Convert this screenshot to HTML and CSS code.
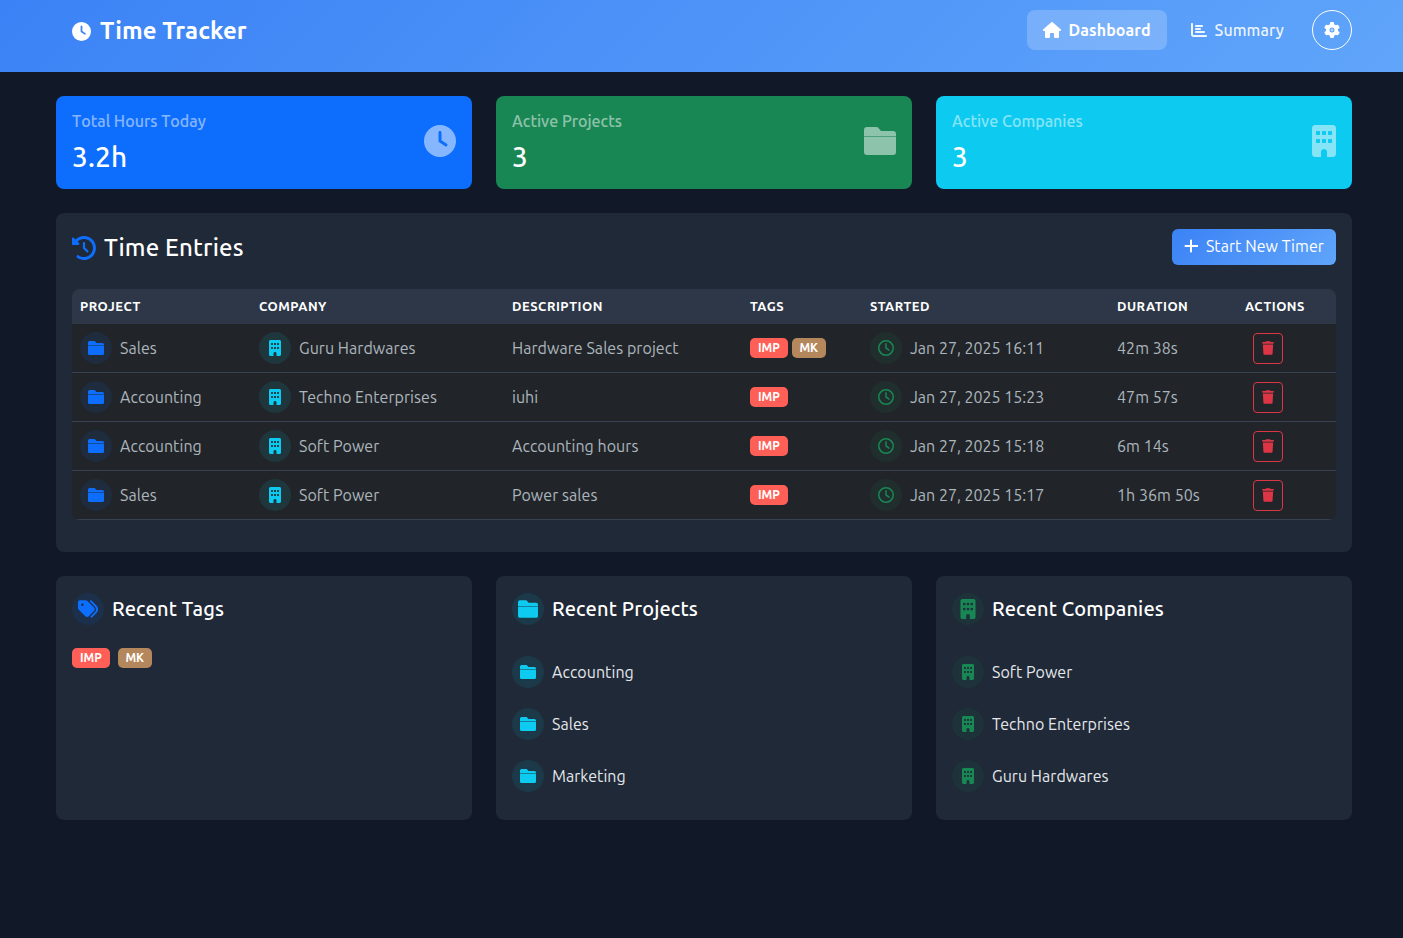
FILE: index.html
```html
<!DOCTYPE html>
<html lang="en">
  <head>
    <meta charset="UTF-8" />
    <title>Time Tracker</title>
    <link rel="stylesheet" href="styles.css">
  </head>
  <body>
    <svg class="sprite" width="0" height="0">
      <symbol id="i-clock-fill" viewBox="0 0 512 512"><path d="M256 0a256 256 0 1 1 0 512A256 256 0 1 1 256 0zM232 120V256c0 8 4 15.5 10.7 20l96 64c11 7.4 25.9 4.4 33.3-6.7s4.4-25.9-6.7-33.3L280 243.2V120c0-13.3-10.7-24-24-24s-24 10.700-24 24z"/></symbol>
      <symbol id="i-clock" viewBox="0 0 512 512"><path d="M464 256A208 208 0 1 1 48 256a208 208 0 1 1 416 0zM0 256a256 256 0 1 0 512 0A256 256 0 1 0 0 256zM232 120V256c0 8 4 15.5 10.7 20l96 64c11 7.4 25.9 4.4 33.3-6.7s4.4-25.9-6.7-33.3L280 243.2V120c0-13.3-10.7-24-24-24s-24 10.700-24 24z"/></symbol>
      <symbol id="i-folder" viewBox="0 0 16 16"><path d="M1.500 1h4.700c.4 0 .7.100.9.400L8.500 3h6A1.500 1.500 0 0 1 16 4.500v1.100H0V2.500A1.500 1.500 0 0 1 1.500 1z"/><path d="M0 5.900h16v7.600a1.500 1.500 0 0 1-1.500 1.500h-13A1.500 1.500 0 0 1 0 13.500V5.900z"/></symbol>
      <symbol id="i-building" viewBox="0 0 384 512"><path d="M48 0C21.500 0 0 21.500 0 48V464c0 26.500 21.500 48 48 48h96V432c0-26.500 21.500-48 48-48s48 21.500 48 48v80h96c26.500 0 48-21.500 48-48V48c0-26.500-21.500-48-48-48H48zM64 240c0-8.800 7.200-16 16-16h32c8.800 0 16 7.200 16 16v32c0 8.800-7.200 16-16 16H80c-8.800 0-16-7.200-16-16V240zm112-16h32c8.800 0 16 7.200 16 16v32c0 8.800-7.200 16-16 16H176c-8.800 0-16-7.200-16-16V240c0-8.800 7.200-16 16-16zm80 16c0-8.800 7.200-16 16-16h32c8.800 0 16 7.200 16 16v32c0 8.800-7.200 16-16 16H272c-8.800 0-16-7.200-16-16V240zM80 96h32c8.800 0 16 7.200 16 16v32c0 8.800-7.200 16-16 16H80c-8.800 0-16-7.200-16-16V112c0-8.800 7.200-16 16-16zm80 16c0-8.800 7.200-16 16-16h32c8.800 0 16 7.200 16 16v32c0 8.800-7.200 16-16 16H176c-8.800 0-16-7.200-16-16V112zM272 96h32c8.800 0 16 7.200 16 16v32c0 8.800-7.200 16-16 16H272c-8.800 0-16-7.200-16-16V112c0-8.800 7.200-16 16-16z"/></symbol>
      <symbol id="i-history" viewBox="0 0 512 512"><path d="M75 75L41 41C25.900 25.900 0 36.600 0 57.900V168c0 13.300 10.700 24 24 24H134.100c21.400 0 32.100-25.900 17-41l-30.800-30.800C155 85.500 203 64 256 64c106 0 192 86 192 192s-86 192-192 192c-40.800 0-78.600-12.700-109.700-34.400c-14.500-10.100-34.400-6.600-44.600 7.900s-6.600 34.400 7.900 44.600C151.200 495 201.700 512 256 512c141.400 0 256-114.600 256-256S397.400 0 256 0C185.300 0 121.300 28.700 75 75zm181 53c-13.300 0-24 10.700-24 24V256c0 6.400 2.500 12.500 7 17l72 72c9.400 9.400 24.600 9.400 33.900 0s9.400-24.600 0-33.900l-65-65V152c0-13.300-10.700-24-24-24z"/></symbol>
      <symbol id="i-tags" viewBox="0 0 512 512"><path d="M345 39.100L472.800 168.400c52.400 53 52.400 138.200 0 191.200L360.800 472.900c-9.300 9.400-24.500 9.500-33.900 .2s-9.500-24.500-.2-33.900L438.600 325.900c33.900-34.300 33.900-89.400 0-123.700L310.900 72.900c-9.300-9.400-9.200-24.600 .2-33.900s24.600-9.200 33.900 .2zM0 229.500V80C0 53.500 21.500 32 48 32H197.500c17 0 33.300 6.700 45.300 18.700l168 168c25 25 25 65.500 0 90.500L277.300 442.700c-25 25-65.500 25-90.500 0l-168-168C6.700 262.700 0 246.500 0 229.500zM144 144a32 32 0 1 0 -64 0 32 32 0 1 0 64 0z"/></symbol>
      <symbol id="i-home" viewBox="0 0 576 512"><path d="M575.800 255.500c0 18-15 32.100-32 32.100h-32l.7 160.200c0 2.700-.2 5.400-.5 8.100V472c0 22.100-17.900 40-40 40H456c-1.100 0-2.200 0-3.300-.1c-1.400 .1-2.800 .1-4.200 .1H416 392c-22.100 0-40-17.900-40-40V448 384c0-17.700-14.300-32-32-32H256c-17.700 0-32 14.300-32 32v64 24c0 22.100-17.900 40-40 40H160 128.100c-1.500 0-3-.1-4.500-.2c-1.200 .1-2.400 .2-3.600 .2H104c-22.100 0-40-17.900-40-40V360c0-.9 0-1.900 .1-2.800V287.600H32c-18 0-32-14-32-32.100c0-9 3-17 10-24L266.400 8c7-7 15-8 22-8s15 2 21 7L564.800 231.500c8 7 12 15 11 24z"/></symbol>
      <symbol id="i-chart" viewBox="0 0 512 512"><path d="M32 32c17.700 0 32 14.300 32 32V400c0 8.800 7.200 16 16 16H480c17.700 0 32 14.300 32 32s-14.300 32-32 32H80c-44.200 0-80-35.800-80-80V64C0 46.300 14.300 32 32 32zm96 96c0-17.700 14.300-32 32-32l192 0c17.700 0 32 14.300 32 32s-14.300 32-32 32l-192 0c-17.700 0-32-14.300-32-32zm32 64H288c17.700 0 32 14.300 32 32s-14.300 32-32 32H160c-17.700 0-32-14.300-32-32s14.300-32 32-32zm0 96H416c17.700 0 32 14.300 32 32s-14.300 32-32 32H160c-17.700 0-32-14.300-32-32s14.300-32 32-32z"/></symbol>
      <symbol id="i-gear" viewBox="0 0 512 512"><path d="M495.900 166.600c3.200 8.700 .5 18.400-6.400 24.600l-43.300 39.400c1.100 8.300 1.700 16.800 1.700 25.400s-.6 17.100-1.700 25.400l43.300 39.400c6.900 6.200 9.600 15.900 6.400 24.600c-4.400 11.900-9.700 23.300-15.800 34.300l-4.700 8.100c-6.600 11-14 21.400-22.100 31.200c-5.900 7.200-15.700 9.600-24.500 6.800l-55.700-17.700c-13.400 10.300-28.200 18.900-44 25.400l-12.500 57.100c-2 9.100-9 16.300-18.200 17.800c-13.800 2.300-28 3.500-42.500 3.500s-28.700-1.200-42.500-3.500c-9.200-1.500-16.200-8.700-18.200-17.800l-12.500-57.100c-15.800-6.500-30.600-15.100-44-25.400L83.100 425.900c-8.800 2.800-18.600 .3-24.500-6.800c-8.100-9.800-15.500-20.200-22.100-31.200l-4.700-8.100c-6.100-11-11.400-22.400-15.800-34.300c-3.200-8.700-.5-18.400 6.400-24.600l43.300-39.400C64.600 273.100 64 264.600 64 256s.6-17.100 1.700-25.400L22.400 191.200c-6.900-6.200-9.600-15.900-6.400-24.600c4.400-11.900 9.700-23.300 15.800-34.300l4.700-8.100c6.600-11 14-21.400 22.100-31.200c5.900-7.200 15.700-9.600 24.500-6.800l55.700 17.700c13.400-10.300 28.200-18.900 44-25.400l12.500-57.100c2-9.100 9-16.300 18.200-17.800C227.300 1.200 241.500 0 256 0s28.700 1.200 42.500 3.500c9.200 1.500 16.200 8.700 18.200 17.800l12.500 57.100c15.800 6.500 30.600 15.100 44 25.400l55.700-17.700c8.800-2.800 18.600-.3 24.500 6.800c8.100 9.800 15.500 20.200 22.100 31.200l4.700 8.100c6.100 11 11.400 22.400 15.800 34.300zM256 336a80 80 0 1 0 0-160 80 80 0 1 0 0 160z"/><circle cx="256" cy="256" r="45" fill-opacity="0.55"/></symbol>
      <symbol id="i-trash" viewBox="0 0 448 512"><path d="M135.200 17.700L128 32H32C14.300 32 0 46.300 0 64S14.300 96 32 96H416c17.700 0 32-14.300 32-32s-14.300-32-32-32H320l-7.200-14.300C307.400 6.800 296.300 0 284.200 0H163.800c-12.100 0-23.200 6.800-28.600 17.700zM416 128H32L53.200 467c1.600 25.300 22.600 45 47.900 45H346.900c25.300 0 46.300-19.700 47.900-45L416 128z"/></symbol>
      <symbol id="i-plus" viewBox="0 0 448 512"><path d="M256 80c0-17.700-14.300-32-32-32s-32 14.300-32 32V224H48c-17.700 0-32 14.300-32 32s14.300 32 32 32H192V432c0 17.700 14.300 32 32 32s32-14.300 32-32V288H432c17.700 0 32-14.300 32-32s-14.300-32-32-32H256V80z"/></symbol>
    </svg>

    <nav class="navbar">
      <a class="brand"><svg class="brand-icon"><use href="#i-clock-fill"/></svg>Time Tracker</a>
      <div class="nav-links">
        <a class="nav-link active"><svg class="nav-icon"><use href="#i-home"/></svg>Dashboard</a>
        <a class="nav-link"><svg class="nav-icon chart-icon"><use href="#i-chart"/></svg>Summary</a>
        <button class="settings-btn"><svg class="gear-icon"><use href="#i-gear"/></svg></button>
      </div>
    </nav>

    <main class="container">
      <section class="stats">
        <div class="stat-card stat-blue">
          <div>
            <p class="stat-label">Total Hours Today</p>
            <p class="stat-value">3.2h</p>
          </div>
          <svg class="stat-icon"><use href="#i-clock-fill"/></svg>
        </div>
        <div class="stat-card stat-green">
          <div>
            <p class="stat-label">Active Projects</p>
            <p class="stat-value">3</p>
          </div>
          <svg class="stat-icon"><use href="#i-folder"/></svg>
        </div>
        <div class="stat-card stat-cyan">
          <div>
            <p class="stat-label">Active Companies</p>
            <p class="stat-value">3</p>
          </div>
          <svg class="stat-icon stat-icon-narrow"><use href="#i-building"/></svg>
        </div>
      </section>

      <section class="panel entries">
        <div class="entries-head">
          <h2><svg class="history-icon"><use href="#i-history"/></svg>Time Entries</h2>
          <button class="new-timer"><svg class="plus-icon"><use href="#i-plus"/></svg>Start New Timer</button>
        </div>
        <div class="table-wrap">
          <table>
            <colgroup>
              <col class="col-project"><col class="col-company"><col class="col-desc"><col class="col-tags"><col class="col-started"><col class="col-duration"><col class="col-actions">
            </colgroup>
            <thead>
              <tr><th>Project</th><th>Company</th><th>Description</th><th>Tags</th><th>Started</th><th>Duration</th><th>Actions</th></tr>
            </thead>
            <tbody>
              <tr>
                <td><div class="with-icon"><span class="circle tint-blue"><svg><use href="#i-folder"/></svg></span>Sales</div></td>
                <td><div class="with-icon"><span class="circle tint-cyan"><svg><use href="#i-building"/></svg></span>Guru Hardwares</div></td>
                <td>Hardware Sales project</td>
                <td><div class="tags"><span class="tag tag-imp">IMP</span><span class="tag tag-mk">MK</span></div></td>
                <td class="date-cell"><div class="with-icon"><span class="circle tint-green"><svg><use href="#i-clock"/></svg></span>Jan 27, 2025 16:11</div></td>
                <td>42m 38s</td>
                <td><button class="delete-btn"><svg><use href="#i-trash"/></svg></button></td>
              </tr>
              <tr>
                <td><div class="with-icon"><span class="circle tint-blue"><svg><use href="#i-folder"/></svg></span>Accounting</div></td>
                <td><div class="with-icon"><span class="circle tint-cyan"><svg><use href="#i-building"/></svg></span>Techno Enterprises</div></td>
                <td>iuhi</td>
                <td><div class="tags"><span class="tag tag-imp">IMP</span></div></td>
                <td class="date-cell"><div class="with-icon"><span class="circle tint-green"><svg><use href="#i-clock"/></svg></span>Jan 27, 2025 15:23</div></td>
                <td>47m 57s</td>
                <td><button class="delete-btn"><svg><use href="#i-trash"/></svg></button></td>
              </tr>
              <tr>
                <td><div class="with-icon"><span class="circle tint-blue"><svg><use href="#i-folder"/></svg></span>Accounting</div></td>
                <td><div class="with-icon"><span class="circle tint-cyan"><svg><use href="#i-building"/></svg></span>Soft Power</div></td>
                <td>Accounting hours</td>
                <td><div class="tags"><span class="tag tag-imp">IMP</span></div></td>
                <td class="date-cell"><div class="with-icon"><span class="circle tint-green"><svg><use href="#i-clock"/></svg></span>Jan 27, 2025 15:18</div></td>
                <td>6m 14s</td>
                <td><button class="delete-btn"><svg><use href="#i-trash"/></svg></button></td>
              </tr>
              <tr>
                <td><div class="with-icon"><span class="circle tint-blue"><svg><use href="#i-folder"/></svg></span>Sales</div></td>
                <td><div class="with-icon"><span class="circle tint-cyan"><svg><use href="#i-building"/></svg></span>Soft Power</div></td>
                <td>Power sales</td>
                <td><div class="tags"><span class="tag tag-imp">IMP</span></div></td>
                <td class="date-cell"><div class="with-icon"><span class="circle tint-green"><svg><use href="#i-clock"/></svg></span>Jan 27, 2025 15:17</div></td>
                <td>1h 36m 50s</td>
                <td><button class="delete-btn"><svg><use href="#i-trash"/></svg></button></td>
              </tr>
            </tbody>
          </table>
        </div>
      </section>

      <section class="recent">
        <div class="panel recent-card">
          <h3 class="recent-title"><span class="circle tint-blue big-icon"><svg><use href="#i-tags"/></svg></span>Recent Tags</h3>
          <div class="recent-tags"><span class="tag tag-imp">IMP</span><span class="tag tag-mk">MK</span></div>
        </div>
        <div class="panel recent-card">
          <h3 class="recent-title"><span class="circle tint-cyan big-icon"><svg><use href="#i-folder"/></svg></span>Recent Projects</h3>
          <ul class="recent-list">
            <li><span class="circle tint-cyan"><svg><use href="#i-folder"/></svg></span>Accounting</li>
            <li><span class="circle tint-cyan"><svg><use href="#i-folder"/></svg></span>Sales</li>
            <li><span class="circle tint-cyan"><svg><use href="#i-folder"/></svg></span>Marketing</li>
          </ul>
        </div>
        <div class="panel recent-card">
          <h3 class="recent-title"><span class="circle tint-green big-icon"><svg><use href="#i-building"/></svg></span>Recent Companies</h3>
          <ul class="recent-list">
            <li><span class="circle tint-green"><svg><use href="#i-building"/></svg></span>Soft Power</li>
            <li><span class="circle tint-green"><svg><use href="#i-building"/></svg></span>Techno Enterprises</li>
            <li><span class="circle tint-green"><svg><use href="#i-building"/></svg></span>Guru Hardwares</li>
          </ul>
        </div>
      </section>
    </main>
  </body>
</html>
```

FILE: styles.css
```css
* {
  box-sizing: border-box;
}

body {
  font-family: Ubuntu, "Noto Sans", sans-serif;
  background: #111827;
  color: #e5e7eb;
  margin: 0;
  min-height: 938px;
  font-size: 16px;
  line-height: 1.5;
}

svg {
  fill: currentColor;
  flex-shrink: 0;
}

.sprite {
  position: absolute;
}

.navbar {
  height: 72px;
  padding: 10px 51px 22px 72px;
  display: flex;
  align-items: center;
  justify-content: space-between;
  background: linear-gradient(135deg, #3b82f6, #60a5fa);
  color: #fff;
}

.brand {
  display: flex;
  align-items: center;
  margin-top: 2px;
  font-size: 24px;
  font-weight: 700;
  letter-spacing: 0.08px;
}

.brand-icon {
  width: 19px;
  height: 19px;
  margin-right: 9px;
}

.nav-links {
  display: flex;
  align-items: center;
}

.nav-link {
  display: flex;
  align-items: center;
  height: 40px;
  padding: 0 16px;
  border-radius: 8px;
  color: rgba(255, 255, 255, 0.9);
  font-weight: 500;
  letter-spacing: 0.1px;
}

.nav-link.active {
  background: rgba(255, 255, 255, 0.2);
  color: #fff;
  font-weight: 700;
  margin-right: 8px;
}

.nav-icon {
  width: 18px;
  height: 16px;
  margin-right: 7px;
}

.chart-icon {
  width: 16px;
  margin-right: 8px;
}

.settings-btn {
  width: 40px;
  height: 40px;
  margin-left: 12px;
  display: flex;
  align-items: center;
  justify-content: center;
  background: transparent;
  border: 1px solid #fff;
  border-radius: 50%;
  color: #fff;
  padding: 0;
}

.gear-icon {
  width: 16px;
  height: 16px;
}

.container {
  margin: 0 51px 0 56px;
  padding-top: 24px;
}

.stats {
  display: grid;
  grid-template-columns: repeat(3, 1fr);
  gap: 24px;
}

.stat-card {
  display: flex;
  align-items: center;
  justify-content: space-between;
  height: 93px;
  padding: 16px;
  border-radius: 8px;
  color: #fff;
}

.stat-blue {
  background: #0d6efd;
}

.stat-green {
  background: #198754;
}

.stat-cyan {
  background: #0dcaf0;
}

.stat-label {
  margin: 0 0 10px;
  line-height: 18px;
  font-weight: 500;
  font-kerning: none;
  opacity: 0.5;
}

.stat-value {
  margin: 0;
  font-size: 28px;
  font-weight: 500;
  line-height: 33px;
  letter-spacing: 0.2px;
}

.stat-icon {
  width: 32px;
  height: 32px;
  margin-bottom: 3px;
  opacity: 0.5;
}

.stat-icon-narrow {
  width: 24px;
}

.panel {
  background: #1f2937;
  border-radius: 8px;
  padding: 16px;
}

.entries {
  margin-top: 24px;
  height: 339px;
}

.entries-head {
  display: flex;
  align-items: center;
  justify-content: space-between;
  height: 36px;
  margin-bottom: 24px;
}

.entries-head h2 {
  display: flex;
  align-items: center;
  margin: 2px 0 0;
  font-size: 24px;
  font-weight: 500;
  letter-spacing: 0.15px;
  color: #fff;
}

.history-icon {
  width: 24px;
  height: 24px;
  margin-right: 8px;
  color: #0d6efd;
}

.new-timer {
  display: flex;
  align-items: center;
  height: 36px;
  padding: 0 12px 2px;
  border: 0;
  border-radius: 6px;
  background: linear-gradient(135deg, #3b82f6, #60a5fa);
  color: #fff;
  font: inherit;
  letter-spacing: 0.07px;
}

.plus-icon {
  width: 14px;
  height: 16px;
  margin-right: 8px;
}

.table-wrap {
  border-radius: 8px;
  overflow: hidden;
}

table {
  width: 100%;
  border-collapse: separate;
  border-spacing: 0;
  table-layout: fixed;
}

.col-project { width: 179px; }
.col-company { width: 253px; }
.col-desc { width: 238px; }
.col-tags { width: 120px; }
.col-started { width: 247px; }
.col-duration { width: 128px; }
.col-actions { width: 99px; }

th {
  height: 35px;
  padding: 0 8px;
  background: #2d3748;
  color: #fff;
  font-size: 13px;
  font-weight: 700;
  letter-spacing: 0.5px;
  text-align: left;
  text-transform: uppercase;
}

td {
  height: 49px;
  padding: 0 8px;
  background: #212529;
  color: #adb5bd;
  border-bottom: 1px solid #374151;
  letter-spacing: 0.05px;
}

td.date-cell {
  letter-spacing: 0;
}

.with-icon {
  display: flex;
  align-items: center;
  gap: 8px;
}

.circle {
  display: flex;
  align-items: center;
  justify-content: center;
  width: 32px;
  height: 32px;
  border-radius: 50%;
  flex-shrink: 0;
}

.circle svg {
  width: 16px;
  height: 16px;
}

.tint-blue {
  color: #0d6efd;
  background: rgba(13, 110, 253, 0.1);
}

.tint-cyan {
  color: #0dcaf0;
  background: rgba(13, 202, 240, 0.1);
}

.tint-green {
  color: #198754;
  background: rgba(25, 135, 84, 0.1);
}

.tags {
  display: flex;
  gap: 4px;
}

.tag {
  display: inline-block;
  height: 20px;
  padding: 0 8px;
  border-radius: 5px;
  color: #fff;
  font-size: 12px;
  font-weight: 700;
  letter-spacing: 0;
  line-height: 20px;
}

.tag-imp {
  background: #ff5f57;
}

.tag-mk {
  padding: 0 7.5px;
  background: #b5875c;
}

.delete-btn {
  display: flex;
  align-items: center;
  justify-content: center;
  width: 30px;
  height: 31px;
  margin-left: 8px;
  padding: 0;
  background: transparent;
  border: 1px solid #dc3545;
  border-radius: 4px;
  color: #dc3545;
}

.delete-btn svg {
  width: 12px;
  height: 14px;
}

.recent {
  display: grid;
  grid-template-columns: repeat(3, 1fr);
  gap: 24px;
  margin-top: 24px;
}

.recent-card {
  height: 244px;
}

.recent-title {
  display: flex;
  align-items: center;
  gap: 8px;
  height: 32px;
  margin: 1px 0 0;
  font-size: 20px;
  font-weight: 500;
  letter-spacing: 0.15px;
  color: #fff;
}

.big-icon svg {
  width: 20px;
  height: 20px;
}

.recent-tags {
  display: flex;
  gap: 8px;
  margin-top: 23px;
}

.recent-list {
  list-style: none;
  margin: 21px 0 0;
  padding: 0;
}

.recent-list li {
  display: flex;
  align-items: center;
  gap: 8px;
  height: 52px;
  color: #e5e7eb;
  letter-spacing: 0.05px;
}
```
